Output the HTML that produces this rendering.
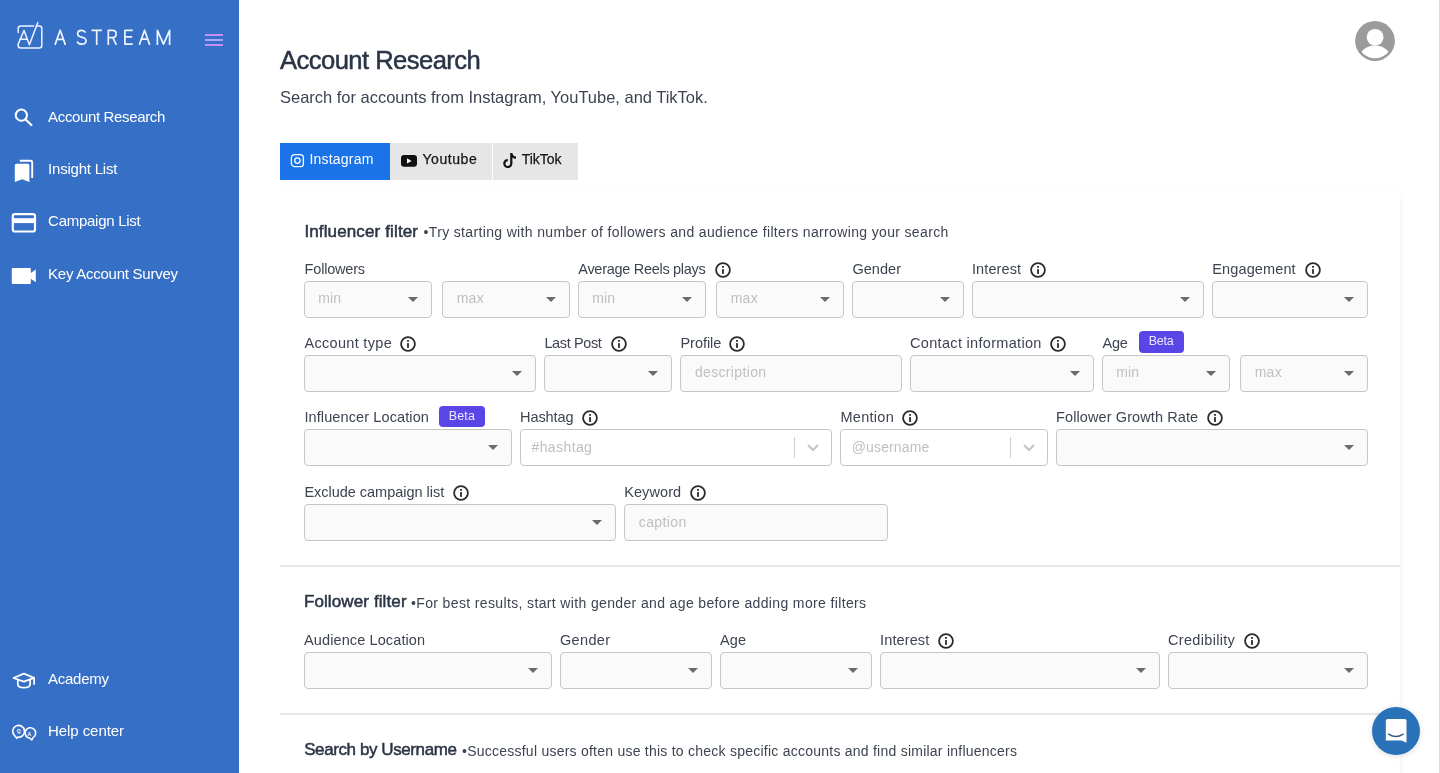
<!DOCTYPE html><html><head><meta charset="utf-8"><style>
*{margin:0;padding:0;box-sizing:border-box}
html,body{width:1440px;height:773px;overflow:hidden;background:#fff;font-family:"Liberation Sans",sans-serif}
#tx{position:absolute;left:0;top:0;width:1440px;height:773px;will-change:transform}
.a{position:absolute;white-space:nowrap}
.inp{position:absolute;border:1px solid #c6c6c6;border-radius:4px}
.car{position:absolute;width:0;height:0;border-left:5px solid transparent;border-right:5px solid transparent;border-top:5px solid #6b6b6b}
</style></head><body>
<div class="a" style="left:0;top:0;width:239px;height:773px;background:#3670c6"></div>
<div class="a" style="left:280px;top:143px;width:110px;height:37px;background:#1a73e8"></div>
<div class="a" style="left:390px;top:143px;width:102px;height:37px;background:#e6e6e6"></div>
<div class="a" style="left:493px;top:143px;width:85px;height:37px;background:#e6e6e6"></div>
<div class="a" style="left:280px;top:192px;width:1120px;height:600px;background:#fff;box-shadow:2px 1px 6px rgba(0,0,0,0.035)"></div>
<div class="a" style="left:280px;top:565px;width:1120px;height:2px;background:#e7e7e7"></div>
<div class="a" style="left:280px;top:713px;width:1120px;height:2px;background:#e7e7e7"></div>
<div class="inp" style="left:304px;top:281px;width:128px;height:37px;background:#fafafa"></div>
<div class="car" style="left:408px;top:297px"></div>
<div class="inp" style="left:442px;top:281px;width:128px;height:37px;background:#fafafa"></div>
<div class="car" style="left:546px;top:297px"></div>
<svg class="a" style="left:714.0px;top:261.0px" width="18" height="18" viewBox="0 0 18 18"><circle cx="9" cy="9" r="6.9" fill="none" stroke="#2a2a2a" stroke-width="1.8"/><rect x="8.1" y="5" width="1.8" height="1.8" fill="#2a2a2a"/><rect x="8.1" y="8.1" width="1.8" height="4.8" fill="#2a2a2a"/></svg>
<div class="inp" style="left:578px;top:281px;width:128px;height:37px;background:#fafafa"></div>
<div class="car" style="left:682px;top:297px"></div>
<div class="inp" style="left:716px;top:281px;width:128px;height:37px;background:#fafafa"></div>
<div class="car" style="left:820px;top:297px"></div>
<div class="inp" style="left:852px;top:281px;width:112px;height:37px;background:#fafafa"></div>
<div class="car" style="left:940px;top:297px"></div>
<svg class="a" style="left:1028.6px;top:261.0px" width="18" height="18" viewBox="0 0 18 18"><circle cx="9" cy="9" r="6.9" fill="none" stroke="#2a2a2a" stroke-width="1.8"/><rect x="8.1" y="5" width="1.8" height="1.8" fill="#2a2a2a"/><rect x="8.1" y="8.1" width="1.8" height="4.8" fill="#2a2a2a"/></svg>
<div class="inp" style="left:972px;top:281px;width:232px;height:37px;background:#fafafa"></div>
<div class="car" style="left:1180px;top:297px"></div>
<svg class="a" style="left:1304.2px;top:261.0px" width="18" height="18" viewBox="0 0 18 18"><circle cx="9" cy="9" r="6.9" fill="none" stroke="#2a2a2a" stroke-width="1.8"/><rect x="8.1" y="5" width="1.8" height="1.8" fill="#2a2a2a"/><rect x="8.1" y="8.1" width="1.8" height="4.8" fill="#2a2a2a"/></svg>
<div class="inp" style="left:1212px;top:281px;width:156px;height:37px;background:#fafafa"></div>
<div class="car" style="left:1344px;top:297px"></div>
<svg class="a" style="left:398.5px;top:335.0px" width="18" height="18" viewBox="0 0 18 18"><circle cx="9" cy="9" r="6.9" fill="none" stroke="#2a2a2a" stroke-width="1.8"/><rect x="8.1" y="5" width="1.8" height="1.8" fill="#2a2a2a"/><rect x="8.1" y="8.1" width="1.8" height="4.8" fill="#2a2a2a"/></svg>
<div class="inp" style="left:304px;top:355px;width:232px;height:37px;background:#fafafa"></div>
<div class="car" style="left:512px;top:371px"></div>
<svg class="a" style="left:610.0px;top:335.0px" width="18" height="18" viewBox="0 0 18 18"><circle cx="9" cy="9" r="6.9" fill="none" stroke="#2a2a2a" stroke-width="1.8"/><rect x="8.1" y="5" width="1.8" height="1.8" fill="#2a2a2a"/><rect x="8.1" y="8.1" width="1.8" height="4.8" fill="#2a2a2a"/></svg>
<div class="inp" style="left:544px;top:355px;width:128px;height:37px;background:#fafafa"></div>
<div class="car" style="left:648px;top:371px"></div>
<svg class="a" style="left:728.4px;top:335.0px" width="18" height="18" viewBox="0 0 18 18"><circle cx="9" cy="9" r="6.9" fill="none" stroke="#2a2a2a" stroke-width="1.8"/><rect x="8.1" y="5" width="1.8" height="1.8" fill="#2a2a2a"/><rect x="8.1" y="8.1" width="1.8" height="4.8" fill="#2a2a2a"/></svg>
<div class="inp" style="left:680px;top:355px;width:222px;height:37px;background:#fafafa"></div>
<svg class="a" style="left:1048.9px;top:335.0px" width="18" height="18" viewBox="0 0 18 18"><circle cx="9" cy="9" r="6.9" fill="none" stroke="#2a2a2a" stroke-width="1.8"/><rect x="8.1" y="5" width="1.8" height="1.8" fill="#2a2a2a"/><rect x="8.1" y="8.1" width="1.8" height="4.8" fill="#2a2a2a"/></svg>
<div class="inp" style="left:910px;top:355px;width:184px;height:37px;background:#fafafa"></div>
<div class="car" style="left:1070px;top:371px"></div>
<div class="a" style="left:1139.0px;top:331.0px;width:45.0px;height:21.8px;background:#5a46e6;border-radius:4px"></div>
<div class="inp" style="left:1102px;top:355px;width:128px;height:37px;background:#fafafa"></div>
<div class="car" style="left:1206px;top:371px"></div>
<div class="inp" style="left:1240px;top:355px;width:128px;height:37px;background:#fafafa"></div>
<div class="car" style="left:1344px;top:371px"></div>
<div class="a" style="left:439.0px;top:405.6px;width:46.1px;height:21.0px;background:#5a46e6;border-radius:4px"></div>
<div class="inp" style="left:304px;top:429px;width:208px;height:37px;background:#fafafa"></div>
<div class="car" style="left:488px;top:445px"></div>
<svg class="a" style="left:581.1px;top:409.0px" width="18" height="18" viewBox="0 0 18 18"><circle cx="9" cy="9" r="6.9" fill="none" stroke="#2a2a2a" stroke-width="1.8"/><rect x="8.1" y="5" width="1.8" height="1.8" fill="#2a2a2a"/><rect x="8.1" y="8.1" width="1.8" height="4.8" fill="#2a2a2a"/></svg>
<div class="inp" style="left:520px;top:429px;width:312px;height:37px;background:#ffffff"></div>
<div class="a" style="left:794px;top:437px;width:1px;height:21px;background:#cfcfcf"></div>
<svg class="a" style="left:806px;top:443px" width="14" height="10" viewBox="0 0 14 10"><path d="M2 2 L7 7 L12 2" fill="none" stroke="#c4c4c4" stroke-width="2"/></svg>
<svg class="a" style="left:900.5px;top:409.0px" width="18" height="18" viewBox="0 0 18 18"><circle cx="9" cy="9" r="6.9" fill="none" stroke="#2a2a2a" stroke-width="1.8"/><rect x="8.1" y="5" width="1.8" height="1.8" fill="#2a2a2a"/><rect x="8.1" y="8.1" width="1.8" height="4.8" fill="#2a2a2a"/></svg>
<div class="inp" style="left:840px;top:429px;width:208px;height:37px;background:#ffffff"></div>
<div class="a" style="left:1010px;top:437px;width:1px;height:21px;background:#cfcfcf"></div>
<svg class="a" style="left:1022px;top:443px" width="14" height="10" viewBox="0 0 14 10"><path d="M2 2 L7 7 L12 2" fill="none" stroke="#c4c4c4" stroke-width="2"/></svg>
<svg class="a" style="left:1206.1px;top:409.0px" width="18" height="18" viewBox="0 0 18 18"><circle cx="9" cy="9" r="6.9" fill="none" stroke="#2a2a2a" stroke-width="1.8"/><rect x="8.1" y="5" width="1.8" height="1.8" fill="#2a2a2a"/><rect x="8.1" y="8.1" width="1.8" height="4.8" fill="#2a2a2a"/></svg>
<div class="inp" style="left:1056px;top:429px;width:312px;height:37px;background:#fafafa"></div>
<div class="car" style="left:1344px;top:445px"></div>
<svg class="a" style="left:451.7px;top:483.7px" width="18" height="18" viewBox="0 0 18 18"><circle cx="9" cy="9" r="6.9" fill="none" stroke="#2a2a2a" stroke-width="1.8"/><rect x="8.1" y="5" width="1.8" height="1.8" fill="#2a2a2a"/><rect x="8.1" y="8.1" width="1.8" height="4.8" fill="#2a2a2a"/></svg>
<div class="inp" style="left:304px;top:504px;width:312px;height:37px;background:#fafafa"></div>
<div class="car" style="left:592px;top:520px"></div>
<svg class="a" style="left:689.1px;top:483.7px" width="18" height="18" viewBox="0 0 18 18"><circle cx="9" cy="9" r="6.9" fill="none" stroke="#2a2a2a" stroke-width="1.8"/><rect x="8.1" y="5" width="1.8" height="1.8" fill="#2a2a2a"/><rect x="8.1" y="8.1" width="1.8" height="4.8" fill="#2a2a2a"/></svg>
<div class="inp" style="left:624px;top:504px;width:264px;height:37px;background:#fafafa"></div>
<div class="inp" style="left:304px;top:652px;width:248px;height:37px;background:#fafafa"></div>
<div class="car" style="left:528px;top:668px"></div>
<div class="inp" style="left:560px;top:652px;width:152px;height:37px;background:#fafafa"></div>
<div class="car" style="left:688px;top:668px"></div>
<div class="inp" style="left:720px;top:652px;width:152px;height:37px;background:#fafafa"></div>
<div class="car" style="left:848px;top:668px"></div>
<svg class="a" style="left:936.7px;top:631.5px" width="18" height="18" viewBox="0 0 18 18"><circle cx="9" cy="9" r="6.9" fill="none" stroke="#2a2a2a" stroke-width="1.8"/><rect x="8.1" y="5" width="1.8" height="1.8" fill="#2a2a2a"/><rect x="8.1" y="8.1" width="1.8" height="4.8" fill="#2a2a2a"/></svg>
<div class="inp" style="left:880px;top:652px;width:280px;height:37px;background:#fafafa"></div>
<div class="car" style="left:1136px;top:668px"></div>
<svg class="a" style="left:1242.7px;top:631.5px" width="18" height="18" viewBox="0 0 18 18"><circle cx="9" cy="9" r="6.9" fill="none" stroke="#2a2a2a" stroke-width="1.8"/><rect x="8.1" y="5" width="1.8" height="1.8" fill="#2a2a2a"/><rect x="8.1" y="8.1" width="1.8" height="4.8" fill="#2a2a2a"/></svg>
<div class="inp" style="left:1168px;top:652px;width:200px;height:37px;background:#fafafa"></div>
<div class="car" style="left:1344px;top:668px"></div>
<!-- logo text -->
<svg class="a" style="left:0;top:0" width="180" height="60" viewBox="0 0 180 60">
<g fill="none" stroke="#eef3ff" stroke-width="1.7" stroke-linejoin="round" stroke-linecap="butt">
<path d="M55 44.9 L60.2 30.2 L65.4 44.9 M56.9 39.3 H63.5"/>
<path d="M85.6 32.6 Q84.3 30.4 81.6 30.4 Q77.6 30.4 77.6 33.8 Q77.6 36.4 81.7 37.2 Q86 38.1 86 40.8 Q86 44.2 81.6 44.2 Q78.4 44.2 77.1 41.6"/>
<path d="M91.5 30.4 H101.9 M96.7 30.4 V44.9"/>
<path d="M108.3 44.9 V30.4 H112.6 Q116.1 30.4 116.1 34 Q116.1 37.6 112.6 37.6 H108.3 M112.8 37.6 L116.4 44.9"/>
<path d="M132.7 30.4 H124.9 V44.1 H132.7 M124.9 36.9 H132.2"/>
<path d="M139.3 44.9 L144.6 30.2 L149.7 44.9 M141.1 39.1 H148"/>
<path d="M157.4 44.9 V30.4 L163.5 44.1 L169.6 30.4 V44.9"/>
</g></svg>
<!-- logo -->
<svg class="a" style="left:0;top:0" width="60" height="60" viewBox="0 0 60 60">
<g fill="none" stroke="#eef3ff" stroke-width="1.5" stroke-linecap="round" stroke-linejoin="round">
<path d="M18.2 32.5 V28.6 Q18.2 26.1 20.7 26.1 H33.6"/>
<path d="M36.3 26.1 H39.3 Q41.8 26.1 41.8 28.6 V45.6 Q41.8 48.1 39.3 48.1 H20.7 Q18.2 48.1 18.2 45.6 V44"/>
<path d="M18.3 44 L24 30.5 L29.4 44.8 L37.7 22.8"/>
<path d="M19.9 39.3 H27"/>
</g></svg>
<!-- hamburger -->
<svg class="a" style="left:205px;top:33px" width="19" height="14" viewBox="0 0 19 14">
<rect x="0" y="1" width="18" height="2" fill="#c48ff6"/><rect x="0" y="6" width="18" height="2" fill="#aaa5fb"/><rect x="0" y="11" width="18" height="2" fill="#c48ff6"/></svg>
<!-- search icon -->
<svg class="a" style="left:10px;top:104px" width="28" height="28" viewBox="0 0 28 28">
<circle cx="11.35" cy="11.2" r="5.6" fill="none" stroke="#fff" stroke-width="2"/>
<path d="M15.4 15.3 L21.4 21" stroke="#fff" stroke-width="2.2" stroke-linecap="round"/></svg>
<!-- insight list icon -->
<svg class="a" style="left:10px;top:155px" width="28" height="32" viewBox="0 0 28 32">
<path d="M9.8 5.8 H20.7 Q22.2 5.8 22.2 7.3 V23" fill="none" stroke="#fff" stroke-width="1.9"/>
<path d="M4.8 10.2 Q4.8 8.7 6.3 8.7 H17.9 Q19.4 8.7 19.4 10.2 V27.1 L12.1 24.2 L4.8 27.1 Z" fill="#fff"/></svg>
<!-- campaign list icon -->
<svg class="a" style="left:10px;top:210px" width="28" height="26" viewBox="0 0 28 26">
<rect x="2.8" y="4.2" width="22.2" height="17.3" rx="2" fill="none" stroke="#fff" stroke-width="2.2"/>
<rect x="2.8" y="8.2" width="22.2" height="4.9" fill="#fff"/></svg>
<!-- key account survey icon -->
<svg class="a" style="left:10px;top:262px" width="28" height="26" viewBox="0 0 28 26">
<rect x="1.8" y="5.9" width="19" height="16" rx="1" fill="#fff"/>
<path d="M20 11.5 L25.8 7.5 V20.3 L20 16.3 Z" fill="#fff"/></svg>
<!-- academy icon -->
<svg class="a" style="left:8px;top:666px" width="32" height="28" viewBox="0 0 32 28">
<g fill="none" stroke="#fff" stroke-width="1.7" stroke-linejoin="round" stroke-linecap="round">
<path d="M5.4 12 L15.9 7.6 L26.1 11.9 L15.9 15.6 Z"/>
<path d="M9.8 13.8 V18.3 Q9.8 21.7 15.9 21.7 Q22.1 21.7 22.1 18.3 V13.8"/>
<path d="M26.1 11.9 V18.1"/></g></svg>
<!-- help center icon -->
<svg class="a" style="left:8px;top:720px" width="32" height="24" viewBox="0 0 32 24">
<g fill="none" stroke="#fff" stroke-width="1.6" stroke-linejoin="round">
<path d="M9.58 17.11 A5.9 5.9 0 1 0 6.08 15.09 L8.8 18.3 Z"/>
<path d="M25.05 17.59 A5.3 5.3 0 1 0 21.94 18.28 L23.8 20 Z"/></g>
<text x="10.7" y="13.3" font-size="5" font-family="Liberation Sans" font-weight="bold" fill="#fff" text-anchor="middle">Q</text>
<text x="21.3" y="15.8" font-size="5" font-family="Liberation Sans" font-weight="bold" fill="#fff" text-anchor="middle">A</text></svg>
<!-- instagram icon -->
<svg class="a" style="left:290px;top:153px" width="15" height="15" viewBox="0 0 15 15">
<rect x="1.4" y="1.6" width="12" height="12" rx="3.2" fill="none" stroke="#fff" stroke-width="1.3"/>
<circle cx="7.4" cy="7.6" r="2.7" fill="none" stroke="#fff" stroke-width="1.3"/>
</svg>
<!-- youtube icon -->
<svg class="a" style="left:400px;top:154px" width="18" height="14" viewBox="0 0 18 14">
<rect x="1" y="1" width="16" height="11.8" rx="3" fill="#111"/>
<path d="M7 4.2 L11.6 6.9 L7 9.6 Z" fill="#fff"/></svg>
<!-- tiktok icon -->
<svg class="a" style="left:502px;top:152px" width="16" height="17" viewBox="0 0 16 17">
<path d="M8.2 1 H10.4 Q10.8 4.3 14 4.6 V6.8 Q11.9 6.8 10.4 5.6 V11.4 A4.6 4.6 0 1 1 5.8 6.9 V9.2 A2.4 2.4 0 1 0 8.2 11.4 Z" fill="#111"/></svg>
<!-- avatar -->
<svg class="a" style="left:1355px;top:21px" width="40" height="40" viewBox="0 0 40 40">
<defs><clipPath id="avc"><circle cx="20" cy="20" r="17.3"/></clipPath></defs>
<circle cx="20" cy="20" r="19.9" fill="#9b9b9b"/>
<circle cx="20.1" cy="16.3" r="8.4" fill="#fff"/>
<g clip-path="url(#avc)"><ellipse cx="20" cy="38.4" rx="16" ry="14" fill="#fff"/></g></svg>
<!-- chat button -->
<div class="a" style="left:1372px;top:707px;width:48px;height:48px;border-radius:50%;background:#2a72b8;box-shadow:0 1px 6px rgba(0,0,0,0.12)"></div>
<svg class="a" style="left:1380px;top:714px" width="32" height="34" viewBox="0 0 32 34">
<path d="M7.8 5 Q5.8 5 5.8 7 V26.4 H21.5 L26.5 28.7 V7 Q26.5 5 24.5 5 Z" fill="#fff"/>
<path d="M8.6 20.2 Q15.9 25 23.1 20.2" fill="none" stroke="#33597f" stroke-width="1.5" stroke-linecap="round"/></svg>
<!-- scrollbar edge -->
<div class="a" style="left:1439px;top:0;width:1px;height:773px;background:#dadada"></div>

<div id="tx">
<div class="a" style="left:48.10px;top:107.60px;font-size:15.00px;line-height:18px;font-weight:400;color:#ffffff;letter-spacing:-0.359px">Account Research</div>
<div class="a" style="left:48.10px;top:160.40px;font-size:15.00px;line-height:18px;font-weight:400;color:#ffffff;letter-spacing:-0.220px">Insight List</div>
<div class="a" style="left:48.10px;top:212.00px;font-size:15.00px;line-height:18px;font-weight:400;color:#ffffff;letter-spacing:-0.274px">Campaign List</div>
<div class="a" style="left:48.10px;top:265.10px;font-size:15.00px;line-height:18px;font-weight:400;color:#ffffff;letter-spacing:-0.256px">Key Account Survey</div>
<div class="a" style="left:48.10px;top:669.90px;font-size:15.00px;line-height:18px;font-weight:400;color:#ffffff;letter-spacing:-0.289px">Academy</div>
<div class="a" style="left:48.10px;top:721.90px;font-size:15.00px;line-height:18px;font-weight:400;color:#ffffff;letter-spacing:-0.082px">Help center</div>
<div class="a" style="left:280.00px;top:44.92px;font-size:25.60px;line-height:31px;font-weight:400;color:#2b3445;letter-spacing:-0.555px;-webkit-text-stroke:0.5px #2b3445">Account Research</div>
<div class="a" style="left:280.00px;top:87.48px;font-size:16.50px;line-height:20px;font-weight:400;color:#3d4451;letter-spacing:-0.015px">Search for accounts from Instagram, YouTube, and TikTok.</div>
<div class="a" style="left:309.40px;top:150.65px;font-size:14.00px;line-height:17px;font-weight:400;color:#ffffff;letter-spacing:0.219px">Instagram</div>
<div class="a" style="left:422.50px;top:150.65px;font-size:14.00px;line-height:17px;font-weight:400;color:#161616;letter-spacing:0.554px;-webkit-text-stroke:0.25px #161616">Youtube</div>
<div class="a" style="left:521.80px;top:150.65px;font-size:14.00px;line-height:17px;font-weight:400;color:#161616;letter-spacing:-0.067px;-webkit-text-stroke:0.25px #161616">TikTok</div>
<div class="a" style="left:304.60px;top:261.47px;font-size:14.50px;line-height:17px;font-weight:400;color:#3d4451;letter-spacing:-0.193px">Followers</div>
<div class="a" style="left:318.30px;top:289.85px;font-size:14.00px;line-height:17px;font-weight:400;color:#bfbfbf;letter-spacing:0.119px">min</div>
<div class="a" style="left:456.70px;top:289.65px;font-size:14.00px;line-height:17px;font-weight:400;color:#bfbfbf;letter-spacing:0.273px">max</div>
<div class="a" style="left:578.30px;top:261.47px;font-size:14.50px;line-height:17px;font-weight:400;color:#3d4451;letter-spacing:-0.291px">Average Reels plays</div>
<div class="a" style="left:592.30px;top:289.85px;font-size:14.00px;line-height:17px;font-weight:400;color:#bfbfbf;letter-spacing:0.119px">min</div>
<div class="a" style="left:730.70px;top:289.65px;font-size:14.00px;line-height:17px;font-weight:400;color:#bfbfbf;letter-spacing:0.273px">max</div>
<div class="a" style="left:852.40px;top:261.47px;font-size:14.50px;line-height:17px;font-weight:400;color:#3d4451;letter-spacing:0.065px">Gender</div>
<div class="a" style="left:972.00px;top:261.47px;font-size:14.50px;line-height:17px;font-weight:400;color:#3d4451;letter-spacing:0.092px">Interest</div>
<div class="a" style="left:1212.30px;top:261.47px;font-size:14.50px;line-height:17px;font-weight:400;color:#3d4451;letter-spacing:0.118px">Engagement</div>
<div class="a" style="left:304.40px;top:335.47px;font-size:14.50px;line-height:17px;font-weight:400;color:#3d4451;letter-spacing:0.316px">Account type</div>
<div class="a" style="left:544.40px;top:335.47px;font-size:14.50px;line-height:17px;font-weight:400;color:#3d4451;letter-spacing:-0.369px">Last Post</div>
<div class="a" style="left:680.50px;top:335.47px;font-size:14.50px;line-height:17px;font-weight:400;color:#3d4451;letter-spacing:-0.052px">Profile</div>
<div class="a" style="left:694.90px;top:364.45px;font-size:14.00px;line-height:17px;font-weight:400;color:#bfbfbf;letter-spacing:0.350px">description</div>
<div class="a" style="left:910.10px;top:335.47px;font-size:14.50px;line-height:17px;font-weight:400;color:#3d4451;letter-spacing:0.309px">Contact information</div>
<div class="a" style="left:1102.60px;top:335.47px;font-size:14.50px;line-height:17px;font-weight:400;color:#3d4451;letter-spacing:-0.306px">Age</div>
<div class="a" style="left:1148.70px;top:334.07px;font-size:12.50px;line-height:15px;font-weight:400;color:#ece9ff;letter-spacing:-0.206px">Beta</div>
<div class="a" style="left:1116.30px;top:363.85px;font-size:14.00px;line-height:17px;font-weight:400;color:#bfbfbf;letter-spacing:0.119px">min</div>
<div class="a" style="left:1254.70px;top:363.65px;font-size:14.00px;line-height:17px;font-weight:400;color:#bfbfbf;letter-spacing:0.273px">max</div>
<div class="a" style="left:304.40px;top:409.47px;font-size:14.50px;line-height:17px;font-weight:400;color:#3d4451;letter-spacing:0.109px">Influencer Location</div>
<div class="a" style="left:448.70px;top:408.67px;font-size:12.50px;line-height:15px;font-weight:400;color:#ece9ff;letter-spacing:0.160px">Beta</div>
<div class="a" style="left:520.00px;top:409.47px;font-size:14.50px;line-height:17px;font-weight:400;color:#3d4451;letter-spacing:-0.069px">Hashtag</div>
<div class="a" style="left:531.50px;top:439.35px;font-size:14.00px;line-height:17px;font-weight:400;color:#bfbfbf;letter-spacing:0.399px">#hashtag</div>
<div class="a" style="left:840.50px;top:409.47px;font-size:14.50px;line-height:17px;font-weight:400;color:#3d4451;letter-spacing:0.268px">Mention</div>
<div class="a" style="left:851.80px;top:439.35px;font-size:14.00px;line-height:17px;font-weight:400;color:#bfbfbf;letter-spacing:0.116px">@username</div>
<div class="a" style="left:1056.10px;top:409.47px;font-size:14.50px;line-height:17px;font-weight:400;color:#3d4451;letter-spacing:0.099px">Follower Growth Rate</div>
<div class="a" style="left:304.40px;top:484.17px;font-size:14.50px;line-height:17px;font-weight:400;color:#3d4451;letter-spacing:-0.022px">Exclude campaign list</div>
<div class="a" style="left:624.20px;top:484.17px;font-size:14.50px;line-height:17px;font-weight:400;color:#3d4451;letter-spacing:0.096px">Keyword</div>
<div class="a" style="left:638.75px;top:513.65px;font-size:14.00px;line-height:17px;font-weight:400;color:#bfbfbf;letter-spacing:0.407px">caption</div>
<div class="a" style="left:304.40px;top:221.61px;font-size:17.00px;line-height:20px;font-weight:400;color:#2b3445;letter-spacing:0.131px;-webkit-text-stroke:0.5px #2b3445">Influencer filter</div>
<div class="a" style="left:423.50px;top:223.65px;font-size:14.00px;line-height:17px;font-weight:400;color:#3d4451;letter-spacing:0.348px">&bull;Try starting with number of followers and audience filters narrowing your search</div>
<div class="a" style="left:303.90px;top:592.21px;font-size:17.00px;line-height:20px;font-weight:400;color:#2b3445;letter-spacing:0.115px;-webkit-text-stroke:0.5px #2b3445">Follower filter</div>
<div class="a" style="left:411.00px;top:594.65px;font-size:14.00px;line-height:17px;font-weight:400;color:#3d4451;letter-spacing:0.361px">&bull;For best results, start with gender and age before adding more filters</div>
<div class="a" style="left:304.20px;top:740.21px;font-size:17.00px;line-height:20px;font-weight:400;color:#2b3445;letter-spacing:-0.411px;-webkit-text-stroke:0.5px #2b3445">Search by Username</div>
<div class="a" style="left:462.00px;top:742.65px;font-size:14.00px;line-height:17px;font-weight:400;color:#3d4451;letter-spacing:0.241px">&bull;Successful users often use this to check specific accounts and find similar influencers</div>
<div class="a" style="left:304.00px;top:631.97px;font-size:14.50px;line-height:17px;font-weight:400;color:#3d4451;letter-spacing:0.111px">Audience Location</div>
<div class="a" style="left:560.00px;top:631.97px;font-size:14.50px;line-height:17px;font-weight:400;color:#3d4451;letter-spacing:0.325px">Gender</div>
<div class="a" style="left:719.90px;top:631.97px;font-size:14.50px;line-height:17px;font-weight:400;color:#3d4451;letter-spacing:0.144px">Age</div>
<div class="a" style="left:880.10px;top:631.97px;font-size:14.50px;line-height:17px;font-weight:400;color:#3d4451;letter-spacing:0.106px">Interest</div>
<div class="a" style="left:1168.10px;top:631.97px;font-size:14.50px;line-height:17px;font-weight:400;color:#3d4451;letter-spacing:0.303px">Credibility</div>
</div>
</body></html>
